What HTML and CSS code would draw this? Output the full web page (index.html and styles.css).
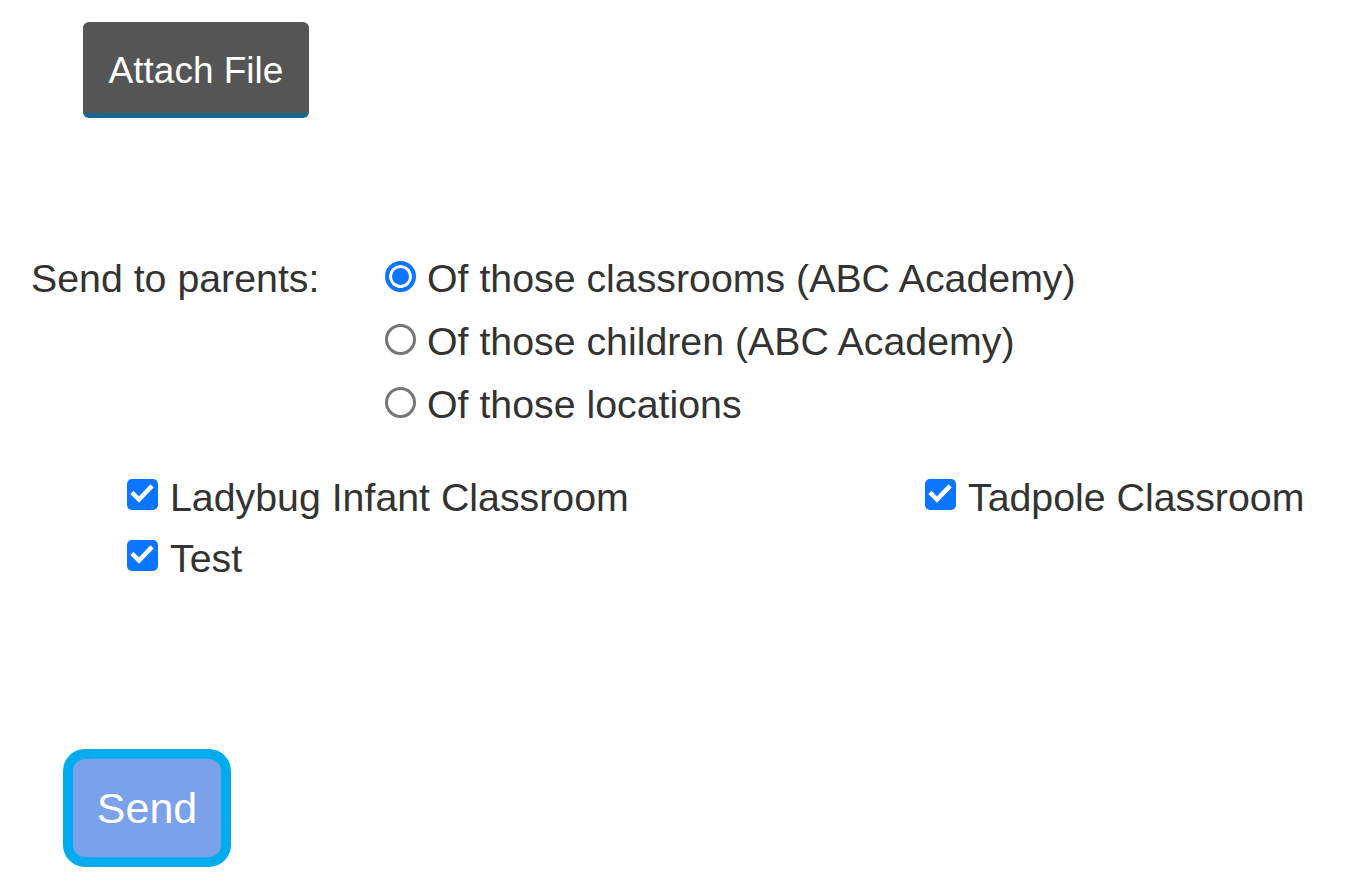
FILE: index.html
```html
<!DOCTYPE html>
<html>
<head>
<meta charset="utf-8">
<link rel="stylesheet" href="styles.css">
</head>
<body>
<div class="page">
  <div class="attach-row">
    <button class="btn-attach">Attach File</button>
  </div>

  <div class="send-to">
    <div class="send-label">Send to parents:</div>
    <div class="options">
      <label class="radio-row"><span class="radio checked"></span>Of those classrooms (ABC Academy)</label>
      <label class="radio-row"><span class="radio"></span>Of those children (ABC Academy)</label>
      <label class="radio-row"><span class="radio"></span>Of those locations</label>
    </div>
  </div>

  <div class="classrooms">
    <label class="check-row"><span class="check"><svg viewBox="0 0 30 30" width="30" height="30"><path d="M6.5 15 L12 20.5 L23.5 8.5" fill="none" stroke="#fff" stroke-width="4.5" stroke-linecap="square"/></svg></span>Ladybug Infant Classroom</label>
    <label class="check-row"><span class="check"><svg viewBox="0 0 30 30" width="30" height="30"><path d="M6.5 15 L12 20.5 L23.5 8.5" fill="none" stroke="#fff" stroke-width="4.5" stroke-linecap="square"/></svg></span>Tadpole Classroom</label>
    <label class="check-row"><span class="check"><svg viewBox="0 0 30 30" width="30" height="30"><path d="M6.5 15 L12 20.5 L23.5 8.5" fill="none" stroke="#fff" stroke-width="4.5" stroke-linecap="square"/></svg></span>Test</label>
  </div>

  <div class="send-row">
    <button class="btn-send">Send</button>
  </div>
</div>
</body>
</html>
```

FILE: styles.css
```css
html, body {
  margin: 0;
  padding: 0;
  background: #fff;
}

.page {
  font-family: "Liberation Sans", Arial, sans-serif;
  font-size: 39.3px;
  color: #333;
  display: flex;
  flex-direction: column;
}

.attach-row {
  padding: 22px 0 0 83px;
  height: 96px;
}

.btn-attach {
  width: 226px;
  height: 96px;
  background: #555;
  color: #fff;
  border: none;
  border-bottom: 5px solid #18658f;
  border-radius: 6px;
  font-family: "Liberation Sans", Arial, sans-serif;
  font-size: 37px;
  padding: 6px 0 0 0;
  box-sizing: border-box;
}

.send-to {
  display: flex;
  margin-top: 129px;
  padding-left: 31px;
}

.send-label {
  width: 354px;
  line-height: 63px;
}

.options {
  display: flex;
  flex-direction: column;
}

.radio-row {
  display: flex;
  align-items: center;
  line-height: 63px;
  gap: 11px;
}

.radio {
  width: 31px;
  height: 31px;
  box-sizing: border-box;
  border-radius: 50%;
  border: 3px solid #767676;
  margin-top: -4px;
  flex: none;
}

.radio.checked {
  border: 4px solid #0a75ff;
  background: #0a75ff;
  box-shadow: inset 0 0 0 3px #fff;
}

.classrooms {
  display: grid;
  grid-template-columns: 798px auto;
  margin-top: 31px;
  padding-left: 127px;
}

.check-row {
  display: flex;
  align-items: center;
  line-height: 61px;
  gap: 12px;
}

.check {
  width: 31px;
  height: 31px;
  border-radius: 5px;
  background: #0a75ff;
  flex: none;
  display: flex;
  margin-top: -6px;
}

.send-row {
  margin-top: 160px;
  padding-left: 63px;
}

.btn-send {
  width: 168px;
  height: 118px;
  box-sizing: border-box;
  border: 10px solid #00acee;
  border-radius: 22px;
  background: #7ba1ea;
  color: #fff;
  font-family: "Liberation Sans", Arial, sans-serif;
  font-size: 43px;
  padding: 0;
}
```
